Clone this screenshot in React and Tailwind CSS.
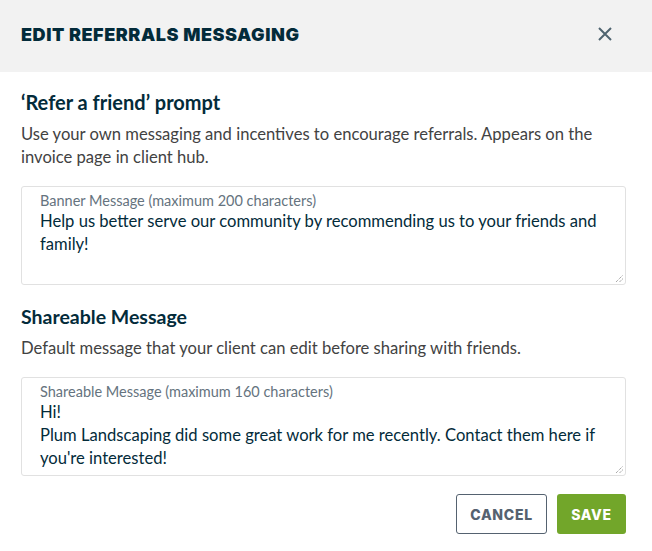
export default function App() {
  return (
    <div className="w-[652px] h-[551px] bg-white text-[#032b3a]" style={{ fontFamily: '"Lato", "Noto Sans", sans-serif' }}>
      <header className="h-[72px] bg-[#f2f2f2] flex items-center justify-between pl-[21px] pr-[40px] pb-[4px]">
        <h1 className="text-[18px] font-black tracking-[0.55px] uppercase" style={{ fontFamily: '"Inter", sans-serif' }}>
          Edit Referrals Messaging
        </h1>
        <svg className="w-[14px] h-[14px]" viewBox="0 0 14 14" fill="none" stroke="#4f6470" strokeWidth="2">
          <path d="M1 1l12 12M13 1L1 13" />
        </svg>
      </header>

      <main className="pl-[21px] pr-[26px] pt-[19px]">
        <section>
          <h2 className="text-[20px] font-bold leading-[22px]">‘Refer a friend’ prompt</h2>
          <p className="mt-[10px] text-[16.6px] leading-[23px] text-[#424242]">
            Use your own messaging and incentives to encourage referrals. Appears on the invoice page in client hub.
          </p>
          <div className="relative mt-[17px] h-[99px] border border-[#e1e1e1] rounded-[3px] px-[18px] pt-[5px]">
            <div className="text-[14.5px] leading-[18px] text-[#65737e]">Banner Message (maximum 200 characters)</div>
            <div className="text-[16.6px] leading-[23px]">
              Help us better serve our community by recommending us to your friends and family!
            </div>
            <Grip />
          </div>
        </section>

        <section className="mt-[21px]">
          <h2 className="text-[19.5px] font-bold leading-[22px]">Shareable Message</h2>
          <p className="mt-[9px] text-[16.6px] leading-[23px] text-[#424242]">
            Default message that your client can edit before sharing with friends.
          </p>
          <div className="relative mt-[17px] h-[99px] border border-[#e1e1e1] rounded-[3px] px-[18px] pt-[5px]">
            <div className="text-[14.5px] leading-[18px] text-[#65737e]">Shareable Message (maximum 160 characters)</div>
            <div className="text-[16.6px] leading-[23px]">
              Hi!
              <br />
              Plum Landscaping did some great work for me recently. Contact them here if you're interested!
            </div>
            <Grip />
          </div>
        </section>

        <div className="mt-[18px] flex justify-end gap-[10px]" style={{ fontFamily: '"Inter", sans-serif' }}>
          <button className="h-[40px] w-[91px] rounded-[3px] border border-[#556270] text-[#556270] text-[14px] font-extrabold tracking-[0.7px]">
            CANCEL
          </button>
          <button className="h-[40px] w-[69px] rounded-[3px] bg-[#72a62a] text-white text-[14px] font-extrabold tracking-[0.7px]">
            SAVE
          </button>
        </div>
      </main>
    </div>
  )
}

function Grip() {
  return (
    <svg className="absolute right-[2px] bottom-[2px] w-[8px] h-[8px]" viewBox="0 0 8 8" stroke="#666" strokeWidth="0.8" strokeDasharray="1 1">
      <path d="M1 8L8 1M4.5 8L8 4.5" />
    </svg>
  )
}
